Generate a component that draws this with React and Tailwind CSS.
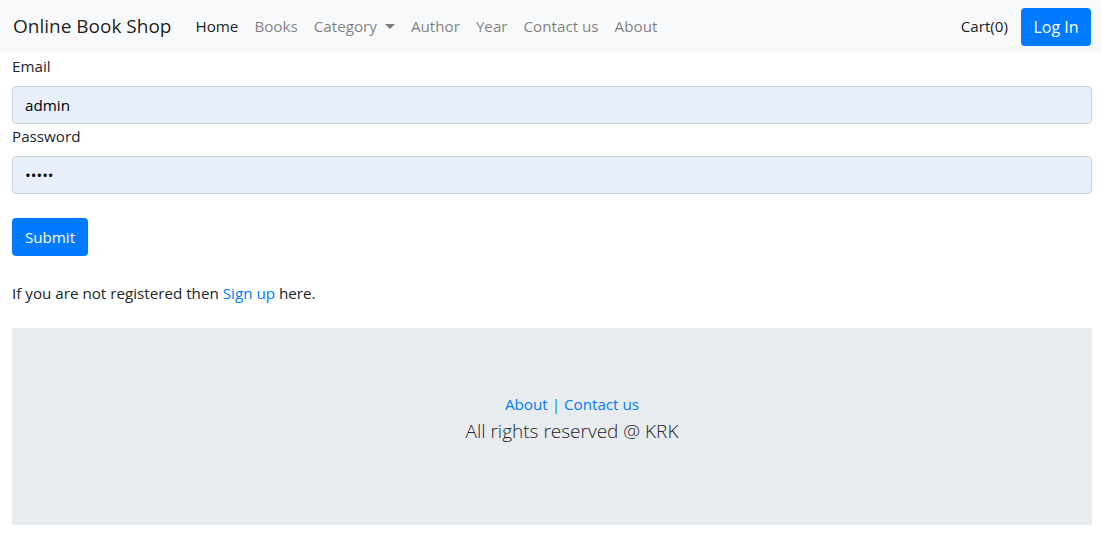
import React, { useState } from "react";

const font = { fontFamily: '"Open Sans", "Noto Sans", sans-serif' };

const NavLink = ({ children, active, caret }) => (
  <a
    href="#"
    className={`flex items-center px-2 text-[15.2px] ${
      active ? "text-black/90" : "text-black/50"
    }`}
  >
    {children}
    {caret && (
      <span className="ml-[8px] inline-block w-0 h-0 border-l-[5px] border-r-[5px] border-t-[5px] border-l-transparent border-r-transparent border-t-black/50" />
    )}
  </a>
);

export default function App() {
  const [email, setEmail] = useState("admin");
  const [password, setPassword] = useState("admin");

  return (
    <div className="min-h-[542px] bg-white text-[#212529]" style={font}>
      {/* Navbar */}
      <nav className="h-[53px] bg-[#f8f9fa] flex items-center pl-[13px] pr-[10px]">
        <a href="#" className="text-[19px] text-black/90 mr-[16px]">
          Online Book Shop
        </a>
        <div className="flex items-center">
          <NavLink active>Home</NavLink>
          <NavLink>Books</NavLink>
          <NavLink caret>Category</NavLink>
          <NavLink>Author</NavLink>
          <NavLink>Year</NavLink>
          <NavLink>Contact us</NavLink>
          <NavLink>About</NavLink>
        </div>
        <div className="ml-auto flex items-center gap-[13px]">
          <a href="#" className="text-[15.2px] text-black/90">Cart(0)</a>
          <button className="h-[38px] w-[70px] rounded-[4px] bg-[#007bff] text-white text-[16px]">
            Log In
          </button>
        </div>
      </nav>

      {/* Login form */}
      <div className="pl-[12px] pr-[9px] text-[15.2px]">
        <form onSubmit={(e) => e.preventDefault()}>
          <label className="block leading-[24px] mb-[8px] mt-[1px]">Email</label>
          <input
            value={email}
            onChange={(e) => setEmail(e.target.value)}
            className="block w-full h-[38px] px-[12px] bg-[#e8f0fe] border border-[#ced4da] rounded-[4px] outline-none text-black"
          />
          <label className="block leading-[24px] mb-[8px]">Password</label>
          <input
            type="password"
            value={password}
            onChange={(e) => setPassword(e.target.value)}
            className="block w-full h-[38px] px-[12px] bg-[#e8f0fe] border border-[#ced4da] rounded-[4px] outline-none text-black"
          />
          <button
            type="submit"
            className="mt-[24px] h-[38px] w-[76px] rounded-[4px] bg-[#007bff] text-white"
          >
            Submit
          </button>
        </form>
        <p className="mt-[25px] leading-[24px]">
          If you are not registered then{" "}
          <a href="#" className="text-[#007bff]">Sign up</a> here.
        </p>

        {/* Footer */}
        <footer className="mt-[23px] h-[197px] bg-[#e9ecef] rounded-[2px] pt-[64px] pl-[40px] text-center">
          <div className="leading-[24px] text-[#007bff]">
            <a href="#">About</a> | <a href="#">Contact us</a>
          </div>
          <p className="text-[19px] leading-[30px] font-light text-[#212529]">
            All rights reserved @ KRK
          </p>
        </footer>
      </div>
    </div>
  );
}
